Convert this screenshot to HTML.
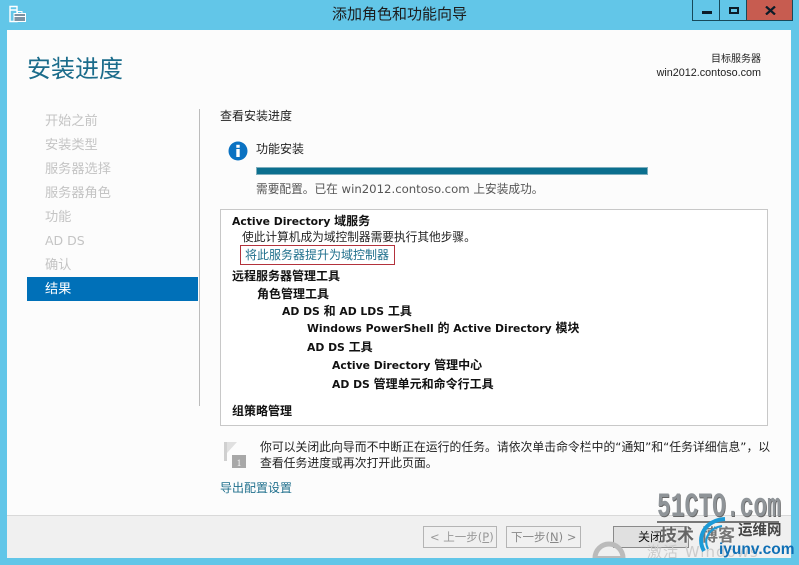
<!DOCTYPE html>
<html><head><meta charset="utf-8"><style>
html,body{margin:0;padding:0}
body{width:799px;height:565px;overflow:hidden;position:relative;background:#62c6e8;font-family:"DejaVu Sans","WenQuanYi Zen Hei","Noto Sans CJK SC",sans-serif;font-size:12px;color:#222}
.t{position:absolute;white-space:nowrap;line-height:16px}
.a{position:absolute}
.n{color:#c4c4c4;left:45px;font-size:13.2px}
.b{font-weight:bold;color:#111;font-size:10.8px}
.b span{font-size:12px}
</style></head><body>
<div class="a" style="left:7px;top:30px;width:784px;height:485px;background:#fcfcfc"></div>
<div class="a" style="left:7px;top:515px;width:784px;height:43px;background:#f0f0f0;border-top:1px solid #d9d9d9;box-sizing:border-box"></div>
<svg class="a" style="left:8px;top:5px" width="19" height="18" viewBox="0 0 19 18"><path d="M2 1.500h7v15H2zM2 5h7" fill="none" stroke="#fff" stroke-width="1.400"/><rect x="6" y="8.500" width="11.500" height="8" fill="#7d93a3" stroke="#fff"/><path d="M9.500 8.500V6.500h4.500v2M6 11.500h11" fill="none" stroke="#fff"/></svg>
<div class="t" style="left:0;top:6px;width:799px;text-align:center;font-size:15px;color:#1c1c1c">添加角色和功能向导</div>
<div class="a" style="left:692px;top:0;width:28px;height:21px;border:1px solid #17495a;border-top:0;box-sizing:border-box"></div>
<div class="a" style="left:720px;top:0;width:27px;height:21px;border-bottom:1px solid #17495a;box-sizing:border-box"></div>
<div class="a" style="left:746px;top:0;width:47px;height:21px;background:#c75c50;border:1px solid #17495a;border-top:0;box-sizing:border-box"></div>
<div class="a" style="left:702px;top:11px;width:10px;height:3px;background:#0c1c28"></div>
<div class="a" style="left:729px;top:7px;width:6px;height:3px;border:2px solid #0c1c28"></div>
<svg class="a" style="left:765px;top:6px" width="11" height="9"><path d="M1 0.500L10 8.500M10 0.500L1 8.500" stroke="#0c1c28" stroke-width="2.200"/></svg>
<div class="t" style="left:27px;top:53px;font-size:24px;line-height:32px;color:#1b6c8b">安装进度</div>
<div class="t" style="right:38px;top:52px;font-size:10px;color:#222">目标服务器</div>
<div class="t" style="right:38px;top:65px;font-family:'Liberation Sans',sans-serif;font-size:10.800px;color:#222">win2012.contoso.com</div>
<div class="t n" style="top:114px">开始之前</div>
<div class="t n" style="top:138px">安装类型</div>
<div class="t n" style="top:162px">服务器选择</div>
<div class="t n" style="top:186px">服务器角色</div>
<div class="t n" style="top:210px">功能</div>
<div class="t n" style="top:233px;font-size:12.500px">AD DS</div>
<div class="t n" style="top:258px">确认</div>
<div class="a" style="left:27px;top:277px;width:171px;height:24px;background:#0070b8"></div>
<div class="t" style="left:45px;top:282px;color:#fff;font-size:13.200px">结果</div>
<div class="a" style="left:199px;top:109px;width:1px;height:297px;background:#bcbcbc"></div>
<div class="t" style="left:220px;top:108px">查看安装进度</div>
<svg class="a" style="left:228px;top:141px" width="20" height="20"><circle cx="10" cy="10" r="9.500" fill="#0a72c2"/><rect x="8.300" y="8" width="3.400" height="8" fill="#fff"/><rect x="8.300" y="3.800" width="3.400" height="3" fill="#fff"/></svg>
<div class="t" style="left:256px;top:141px">功能安装</div>
<div class="a" style="left:256px;top:167px;width:392px;height:8px;background:#0b6f8e;border:1px solid #7eaebd;box-sizing:border-box"></div>
<div class="t" style="left:256px;top:181px;color:#555;font-size:11.700px">需要配置。已在 win2012.contoso.com 上安装成功。</div>
<div class="a" style="left:220px;top:209px;width:548px;height:217px;background:#fff;border:1px solid #c8c8c8;box-sizing:border-box"></div>
<div class="t b" style="left:232px;top:213px">Active Directory <span>域服务</span></div>
<div class="t" style="left:242px;top:229px;font-size:11.700px">使此计算机成为域控制器需要执行其他步骤。</div>
<div class="a" style="left:240px;top:245px;width:155px;height:20px;border:1px solid #b3323c;box-sizing:border-box"></div>
<div class="t" style="left:245px;top:247px;color:#1f6f8c;font-size:12px">将此服务器提升为域控制器</div>
<div class="t b" style="left:232px;top:268px"><span>远程服务器管理工具</span></div>
<div class="t b" style="left:257px;top:286px"><span>角色管理工具</span></div>
<div class="t b" style="left:282px;top:303px">AD DS <span>和</span> AD LDS <span>工具</span></div>
<div class="t b" style="left:307px;top:320px">Windows PowerShell <span>的</span> Active Directory <span>模块</span></div>
<div class="t b" style="left:307px;top:339px">AD DS <span>工具</span></div>
<div class="t b" style="left:332px;top:357px">Active Directory <span>管理中心</span></div>
<div class="t b" style="left:332px;top:376px">AD DS <span>管理单元和命令行工具</span></div>
<div class="t b" style="left:232px;top:403px"><span>组策略管理</span></div>
<svg class="a" style="left:224px;top:441px" width="23" height="27"><path d="M0 1h3v19H0z" fill="#d0d0d0"/><path d="M3 1h10L3 12z" fill="#e0e0e0"/><rect x="8" y="14" width="14" height="13" fill="#a8a8a8"/><text x="15" y="25" font-size="9" fill="#fff" text-anchor="middle" font-family="Liberation Serif">1</text></svg>
<div class="t" style="left:260px;top:439px;font-size:11.850px">你可以关闭此向导而不中断正在运行的任务。请依次单击命令栏中的“通知”和“任务详细信息”，以</div>
<div class="t" style="left:260px;top:455px;font-size:11.850px">查看任务进度或再次打开此页面。</div>
<div class="t" style="left:220px;top:480px;color:#1f6f8c">导出配置设置</div>
<div class="a" style="left:423px;top:526px;width:74px;height:22px;border:1px solid #b4b4b4;box-sizing:border-box"></div>
<div class="t" style="left:430px;top:529px;color:#999;font-size:11.500px">&lt; 上一步(<u>P</u>)</div>
<div class="a" style="left:506px;top:526px;width:75px;height:22px;border:1px solid #b4b4b4;box-sizing:border-box"></div>
<div class="t" style="left:511px;top:529px;color:#888;font-size:11.500px">下一步(<u>N</u>) &gt;</div>
<div class="a" style="left:613px;top:526px;width:76px;height:22px;background:#e0e0e0;border:1px solid #8a8a8a;box-sizing:border-box"></div>
<div class="t" style="left:638px;top:529px;color:#111">关闭</div>
<svg class="a" style="left:590px;top:538px" width="40" height="27"><circle cx="19" cy="20" r="14" fill="none" stroke="#bbb" stroke-width="5"/><rect x="5" y="18" width="28" height="4" fill="#bbb"/></svg>
<div class="t" style="left:647px;top:543px;font-size:15px;line-height:18px;color:#ccc;letter-spacing:1px">激活 Windows</div>
<div class="a" style="left:0;top:558px;width:799px;height:7px;background:#62c6e8"></div>
<div class="t" style="left:657px;top:491px;font-family:'Liberation Mono',monospace;font-weight:bold;font-size:34px;line-height:34px;color:#8f9498;transform:scaleX(.675);transform-origin:left top;text-shadow:1px 1px 0 #666">51CTO.com</div>
<div class="a" style="left:657px;top:521px;width:122px;height:2px;background:#777"></div>
<div class="t" style="left:660px;top:524px;font-size:17px;line-height:24px;font-weight:bold;color:#666;text-shadow:0 0 2px #fff">技术</div>
<div class="t" style="left:701px;top:524px;font-size:17px;line-height:24px;font-weight:bold;color:#777;text-shadow:0 0 2px #fff">博客</div>
<svg class="a" style="left:695px;top:515px" width="50" height="48"><path d="M9 36C1 22 10 5 30 4" fill="none" stroke="#1c9ad6" stroke-width="4"/><path d="M13 34C8 24 14 13 27 11" fill="none" stroke="#1c9ad6" stroke-width="2"/></svg>
<div class="t" style="left:738px;top:523px;font-size:14.500px;font-weight:bold;color:#444">运维网</div>
<div class="t" style="left:719px;top:541px;font-family:'Liberation Sans',sans-serif;font-size:15.500px;font-weight:bold;color:#0f6fb5;line-height:18px">iyunv.com</div>
</body></html>
